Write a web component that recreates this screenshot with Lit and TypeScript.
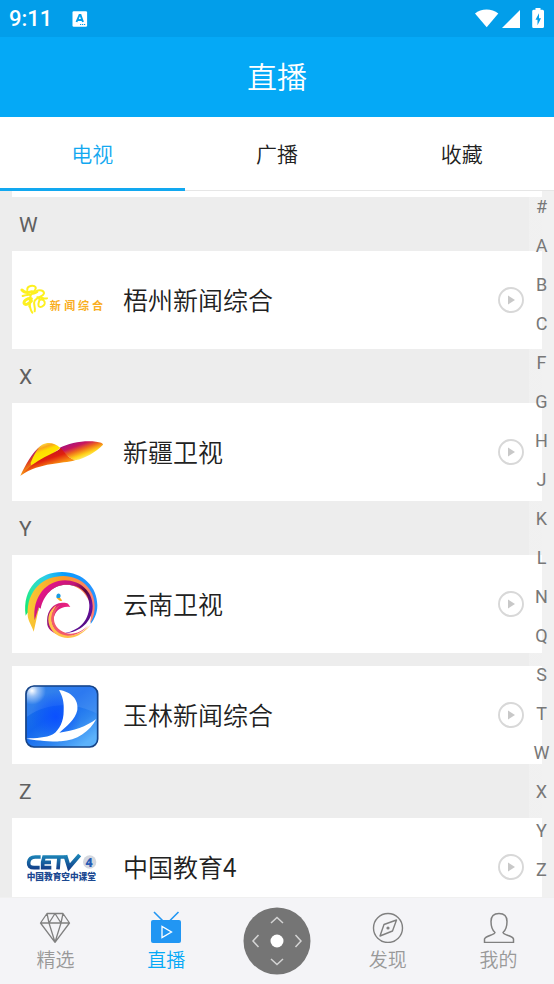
import { LitElement, html, css, svg, type TemplateResult } from "lit";
import { customElement, state } from "lit/decorators.js";
import { classMap } from "lit/directives/class-map.js";

interface Channel {
  name: string;
  logo: TemplateResult;
}

interface Section {
  letter: string;
  channels: Channel[];
}

const wuzhouLogo = html`<svg class="logo" viewBox="60 54 252 252" aria-hidden="true">
  <g fill="none" stroke="#fdf020" stroke-linecap="round" stroke-linejoin="round">
    <path stroke-width="9" d="M66 150c6 7 18 9 30 5M94 176c-10-2-22 4-22 13 3 9 16 2 22-6" />
    <path stroke-width="6" d="M82 150c-2-14 20-16 25-8 3 9-10 14-15 24-4 12 0 22-4 34M68 168c12-6 30-2 44-12" />
    <path stroke-width="6" d="M88 190c2 12 4 22 9 28M108 154c12-6 24-2 24 6-2 10-20 10-28 22-6 12 4 20 0 32M112 172c12-2 20 6 29 3M118 180c10-4 18 2 16 11-2 8-14 13-18 7-4-8 4-16 2-20" />
  </g>
  <text class="cjk" x="149 193 234 276" y="211" font-size="33" font-weight="700" fill="#f9ae22">新闻综合</text>
</svg>`;

const xinjiangLogo = html`<svg class="logo" viewBox="60 30 252 252" aria-hidden="true">
  <defs>
    <linearGradient id="xa" x1="92" y1="152" x2="118" y2="190" gradientUnits="userSpaceOnUse">
      <stop offset="0" stop-color="#f3a52a" /><stop offset=".25" stop-color="#b3206a" />
      <stop offset=".55" stop-color="#e0401c" /><stop offset="1" stop-color="#f9a010" />
    </linearGradient>
    <linearGradient id="xb" x1="232" y1="122" x2="252" y2="176" gradientUnits="userSpaceOnUse">
      <stop offset="0" stop-color="#a8127c" /><stop offset=".25" stop-color="#c9165c" />
      <stop offset=".5" stop-color="#ee6a1c" /><stop offset=".78" stop-color="#ffd21a" />
      <stop offset="1" stop-color="#fff27a" />
    </linearGradient>
    <linearGradient id="xc" x1="150" y1="150" x2="165" y2="195" gradientUnits="userSpaceOnUse">
      <stop offset="0" stop-color="#c31420" /><stop offset=".5" stop-color="#e0200f" />
      <stop offset="1" stop-color="#f9920f" />
    </linearGradient>
    <linearGradient id="xd" x1="130" y1="128" x2="144" y2="165" gradientUnits="userSpaceOnUse">
      <stop offset="0" stop-color="#ffe94a" /><stop offset=".35" stop-color="#f9a51c" />
      <stop offset=".6" stop-color="#ffdc00" /><stop offset="1" stop-color="#ffe600" />
    </linearGradient>
  </defs>
  <path fill="url(#xb)" d="M178 144c30-16 76-24 110-19 12 1 22 4 21 9-22 22-50 40-84 47-16-6-34-20-47-37z" />
  <path fill="url(#xa)" d="M61 227c14-30 36-72 62-90l30 20L90 204z" />
  <path fill="url(#xd)" d="M92 188c8-20 20-44 34-54 18-9 38-6 55 10-30 24-58 40-88 52z" />
  <path fill="url(#xc)" d="M61 227c22-22 46-42 72-55 18-9 38-18 50-28 10 14 22 30 42 37-40 12-100 4-164 46z" />
</svg>`;

const yunnanLogo = html`<svg class="logo" viewBox="60 36 252 252" aria-hidden="true">
  <defs>
    <linearGradient id="ya" x1="80" y1="190" x2="290" y2="130" gradientUnits="userSpaceOnUse">
      <stop offset="0" stop-color="#15e874" /><stop offset=".16" stop-color="#2be5b0" />
      <stop offset=".4" stop-color="#2bcbe8" /><stop offset=".65" stop-color="#079cff" />
      <stop offset="1" stop-color="#2a93ff" />
    </linearGradient>
    <linearGradient id="yb" x1="90" y1="0" x2="290" y2="0" gradientUnits="userSpaceOnUse">
      <stop offset="0" stop-color="#f9c733" /><stop offset=".5" stop-color="#fb9a28" /><stop offset="1" stop-color="#ff7a78" />
    </linearGradient>
    <linearGradient id="yc" x1="110" y1="110" x2="260" y2="240" gradientUnits="userSpaceOnUse">
      <stop offset="0" stop-color="#f0148c" /><stop offset=".4" stop-color="#c01678" />
      <stop offset=".6" stop-color="#5c0638" /><stop offset=".8" stop-color="#6a10a0" /><stop offset="1" stop-color="#4a0b78" />
    </linearGradient>
    <linearGradient id="yd" x1="140" y1="0" x2="210" y2="0" gradientUnits="userSpaceOnUse">
      <stop offset="0" stop-color="#86107c" /><stop offset=".3" stop-color="#d0207c" /><stop offset="1" stop-color="#ef2080" />
    </linearGradient>
  </defs>
  <path fill="url(#ya)" d="M77 197C66 112 120 66 186 66c64 0 106 46 106 100 0 24-8 40-20 56 4-32 8-52-4-72-12-32-42-46-68-46-40 0-75 31-84 78-14-6-26-6-39 15z" />
  <path fill="url(#yb)" d="M101 245c-4-14-18-34-18-50C80 120 130 78 190 78c55 0 95 42 94 90 0 22-4 37-14 52 8-40 2-62-8-76-14-26-38-40-62-40-40 0-75 31-84 74z" />
  <path fill="url(#yc)" d="M104 211C96 140 140 91 195 91c45 0 83 34 83 77 0 47-38 80-86 82 53-10 76-45 76-85 0-35-28-61-68-61s-70 31-78 72l-6-4z" />
  <path fill="url(#yd)" d="M142 224c-4-34 10-56 34-64l6-1c10-1 18 0 22 2l7 10c-28-4-46 12-50 34-4 24 8 44 34 51-30 0-50-16-53-32z" />
  <path fill="#ffc24a" d="M170 166c-22 14-30 36-22 60 10 28 40 44 72 36 20-6 38-20 52-38-28 28-56 38-84 28-28-10-36-34-32-54 2-14 8-24 14-32z" />
  <path fill="#f25a6c" d="M180 165c-22 10-30 32-24 54 6 24 24 36 48 38 24 0 46-12 62-32-22 22-46 30-68 24-26-8-38-28-36-48 2-14 8-26 18-36z" />
  <path fill="#1a9be0" d="M169 140c0-7 4-10 9-9 5 2 5 9 1 13h-9z" />
  <path fill="#f7a81d" d="M170 144h11l6 8-6 1-4-2z" />
</svg>`;

const yulinLogo = html`<svg class="logo" viewBox="60 39 252 252" aria-hidden="true">
  <defs>
    <linearGradient id="la" x1="100" y1="75" x2="240" y2="262" gradientUnits="userSpaceOnUse">
      <stop offset="0" stop-color="#1f78e4" /><stop offset=".45" stop-color="#1266ee" />
      <stop offset=".75" stop-color="#2f86f0" /><stop offset="1" stop-color="#5cb2fb" />
    </linearGradient>
    <radialGradient id="lb" cx="96" cy="92" r="42" gradientUnits="userSpaceOnUse">
      <stop offset="0" stop-color="#fff" /><stop offset=".4" stop-color="#fff" stop-opacity=".5" /><stop offset="1" stop-color="#fff" stop-opacity="0" />
    </radialGradient>
    <radialGradient id="lc" cx="168" cy="170" r="75" gradientUnits="userSpaceOnUse">
      <stop offset="0" stop-color="#0b50ff" /><stop offset="1" stop-color="#0b50ff" stop-opacity="0" />
    </radialGradient>
  </defs>
  <rect x="77" y="77" width="217" height="185" rx="25" fill="url(#la)" />
  <path fill="#6aa6f4" opacity=".3" d="M80 100q0-21 21-21h170q20 0 20 20v62c-60-30-140-40-211 10z" />
  <rect x="77" y="77" width="217" height="185" rx="25" fill="url(#lc)" />
  <rect x="77" y="77" width="217" height="185" rx="25" fill="url(#lb)" />
  <rect x="78" y="78" width="215" height="183" rx="24" fill="none" stroke="#174487" stroke-width="5" />
  <path fill="#fff" d="M177 90c34 4 60 28 55 60-6 30-32 48-54 68 44-6 80-18 111-41-20 38-58 64-106 67-40 1-80-4-104-8 30-2 58-2 80-13 20-14 32-40 32-70 2-26-4-46-14-63z" />
</svg>`;

const cetvLogo = html`<svg class="logo" viewBox="60 45 252 252" aria-hidden="true">
  <defs>
    <linearGradient id="ca" x1="0" y1="135" x2="0" y2="180" gradientUnits="userSpaceOnUse">
      <stop offset="0" stop-color="#1c86b8" /><stop offset="1" stop-color="#123a86" />
    </linearGradient>
  </defs>
  <g fill="none" stroke="url(#ca)" stroke-width="11">
    <path d="M122 141h-16q-18 0-20 16t16 16h17M157 141h-25l-4 16v16h26M127 157h26M157 141h40M177 141l-3 37" />
    <path stroke-width="12" d="M196 136l11 36 32-37" />
  </g>
  <circle cx="269" cy="156" r="20" fill="#d3d7df" />
  <text class="latin" x="256" y="170" font-size="39" font-weight="900" fill="#285cb4">4</text>
  <text class="cjk" x="80" y="209" font-size="26" font-weight="900" fill="#1b4891">中国教育空中课堂</text>
</svg>`;

const SECTIONS: Section[] = [
  { letter: "W", channels: [{ name: "梧州新闻综合", logo: wuzhouLogo }] },
  { letter: "X", channels: [{ name: "新疆卫视", logo: xinjiangLogo }] },
  {
    letter: "Y",
    channels: [
      { name: "云南卫视", logo: yunnanLogo },
      { name: "玉林新闻综合", logo: yulinLogo },
    ],
  },
  { letter: "Z", channels: [{ name: "中国教育4", logo: cetvLogo }] },
];

const TABS = ["电视", "广播", "收藏"];
const INDEX = [..."#ABCFGHJKLNQSTWXYZ"];

const diamondIcon = svg`<g fill="none" stroke="#808080" stroke-width="1.3" stroke-linejoin="round">
  <path d="M8 2.500h16l6.500 9.500L16 31.300 1.500 12zM1.500 12h29M8 2.500 10 12l6 19.300L22 12l2-9.500M10 12l6-9.500L22 12" /></g>`;
const tvIcon = svg`<path d="M4 1l8.500 8.500M28.500 1 20 9.500" fill="none" stroke="#2196f3" stroke-width="1.600" />
  <rect x="1" y="9" width="30" height="23" rx="2" fill="#2196f3" />
  <path d="M12 15.500v11l9.500-5.500z" fill="none" stroke="#fff" stroke-width="1.300" />`;
const compassIcon = svg`<g fill="none" stroke="#808080" stroke-width="1.400" stroke-linejoin="round">
  <circle cx="16" cy="17" r="14.500" /><path d="M24.500 9 20.500 20 8 25 12 13.500z" /></g>
  <circle cx="16" cy="17" r="1.600" fill="#808080" />`;
const personIcon = svg`<path d="M16 2.500c-5 0-8 3-8 8 0 5 .5 8 4 11-.2 2.500-9.500 3-10.500 6.500v3.500h29V28c-1-3.500-10.300-4-10.500-6.500 3.500-3 4-6 4-11 0-5-3-8-8-8z"
  fill="none" stroke="#808080" stroke-width="1.500" stroke-linejoin="round" />`;

@customElement("app-root")
export class AppRoot extends LitElement {
  @state() private tab = 0;
  @state() private page = "直播";

  static styles = css`
    :host {
      display: flex;
      flex-direction: column;
      height: 100vh;
      overflow: hidden;
      background: #ededed;
      color: #212121;
      font-family: Roboto, "Noto Sans CJK SC", sans-serif;
      font-weight: 350;
    }
    button {
      font: inherit;
      color: inherit;
      background: none;
      border: 0;
      padding: 0;
      margin: 0;
      cursor: pointer;
    }
    svg { display: block; flex: none; }
    .cjk { font-family: "Noto Sans CJK SC", sans-serif; }
    .latin { font-family: Roboto, sans-serif; }
    .status {
      flex: none;
      display: flex;
      align-items: center;
      height: 37px;
      padding: 0 9px;
      background: #029eea;
      color: #fff;
      font-size: 22px;
      font-weight: 500;
    }
    .clock { margin-right: 20px; }
    .signals { display: flex; align-items: center; margin-left: auto; }
    .header {
      flex: none;
      display: flex;
      align-items: center;
      justify-content: center;
      height: 80px;
      padding-bottom: 4px;
      box-sizing: border-box;
      background: #05a9f6;
      color: #fff;
    }
    h1 { margin: 0; font-size: 30px; font-weight: 350; }
    .tabs {
      flex: none;
      display: flex;
      height: 73px;
      background: #fff;
      border-bottom: 1px solid #e6e6e6;
    }
    .tab {
      flex: 1;
      font-size: 21px;
      border-bottom: 3px solid transparent;
      margin-bottom: -1px;
    }
    .tab.active { color: #12a8f0; border-color: #12a8f0; }
    .body { flex: 1; min-height: 0; display: flex; position: relative; }
    .list {
      flex: 1;
      padding: 0 12px;
      overflow-y: auto;
      scrollbar-width: none;
    }
    .tail { height: 6px; background: #fff; }
    h2 {
      margin: 0;
      padding: 3px 0 0 7px;
      font-size: 21px;
      line-height: 51px;
      font-weight: 400;
      color: #606060;
    }
    .cards { display: flex; flex-direction: column; gap: 13px; }
    .card {
      display: flex;
      align-items: center;
      width: 100%;
      height: 98px;
      padding: 0 18px 0 8px;
      background: #fff;
      text-align: left;
    }
    .logo { width: 84px; height: 84px; }
    .name {
      flex: 1;
      margin-left: 19px;
      padding-bottom: 2px;
      font-family: "Noto Sans CJK SC", sans-serif;
      font-size: 25px;
    }
    .index {
      position: absolute;
      top: 0;
      right: 0;
      bottom: 0;
      width: 25px;
      display: flex;
      flex-direction: column;
      gap: 8px;
      overflow: hidden;
      background: linear-gradient(to right, rgba(255, 255, 255, 0.2) 13px, #f1f1f1 13px);
    }
    .index button { font-size: 18px; font-weight: 400; line-height: 31px; color: #787878; }
    .nav {
      flex: none;
      display: flex;
      height: 86px;
      background: #f4f4f7;
      border-top: 1px solid #f0f0f0;
    }
    .item {
      flex: 1;
      display: flex;
      flex-direction: column;
      align-items: center;
      justify-content: flex-start;
      gap: 5px;
      padding-top: 13px;
      font-size: 19px;
      line-height: 26px;
      color: #999;
    }
    .item.active { color: #05a9f6; }
    .remote { flex: 1; display: flex; align-items: center; justify-content: center; }
  `;

  private renderCard(c: Channel) {
    return html`<button class="card">
      ${c.logo}
      <span class="name">${c.name}</span>
      <svg width="26" height="26" viewBox="0 0 26 26" aria-hidden="true">
        <circle cx="13" cy="13" r="12" fill="none" stroke="#d8d8d8" stroke-width="1.900" />
        <path d="M10 8.500v9l7-4.500z" fill="#c8c8c8" />
      </svg>
    </button>`;
  }

  private renderItem(label: string, icon: TemplateResult | ReturnType<typeof svg>) {
    return html`<button
      class=${classMap({ item: true, active: this.page === label })}
      @click=${() => (this.page = label)}
    >
      <svg width="32" height="32" viewBox="0 0 32 32" aria-hidden="true">${icon}</svg>
      ${label}
    </button>`;
  }

  render() {
    return html`
      <div class="status">
        <span class="clock">9:11</span>
        <svg width="16" height="16" viewBox="0 0 16 16" aria-hidden="true">
          <rect x=".5" y=".3" width="14.600" height="15.400" rx="1.300" fill="#fff" />
          <path d="M4.500 11 7.500 4h1L11 11M5.500 9h4.500" fill="none" stroke="#029eea" stroke-width="1.900" />
          <path d="M8 13.500h6" stroke="#029eea" stroke-width="1.200" stroke-dasharray="1.200 .8" />
        </svg>
        <div class="signals">
          <svg width="71" height="23" viewBox="474 7 71 23" fill="#fff" aria-hidden="true">
            <path d="M475 13.500C481 8 492 8 498.300 13.500L486.700 27.300z" />
            <path d="M520 10v18h-18z" />
            <path fill-rule="evenodd" d="M535.500 8h5v1.800h2q1.500 0 1.500 1.500v15.200q0 1.500-1.500 1.500h-9q-1.300 0-1.300-1.500V11.300q0-1.500 1.300-1.500h2zM539 13.200l-3.500 6.500h2v5.500l3.500-7h-2z" />
          </svg>
        </div>
      </div>
      <header class="header"><h1>直播</h1></header>
      <div class="tabs">
        ${TABS.map(
          (t, i) => html`<button
            class=${classMap({ tab: true, active: i === this.tab })}
            @click=${() => (this.tab = i)}
          >${t}</button>`
        )}
      </div>
      <div class="body">
        <main class="list">
          <div class="tail"></div>
          ${SECTIONS.map(
            (s) => html`<section>
              <h2>${s.letter}</h2>
              <div class="cards">${s.channels.map((c) => this.renderCard(c))}</div>
            </section>`
          )}
        </main>
        <div class="index">${INDEX.map((l) => html`<button>${l}</button>`)}</div>
      </div>
      <nav class="nav">
        ${this.renderItem("精选", diamondIcon)}
        ${this.renderItem("直播", tvIcon)}
        <button class="remote" aria-label="遥控器">
          <svg width="68" height="68" viewBox="0 0 68 68" aria-hidden="true">
            <circle cx="34" cy="34" r="33.500" fill="#757575" />
            <circle cx="34" cy="34" r="6.500" fill="#fff" />
            <path d="M28 16l6-5.500 6 5.500M28 52l6 5.500 6-5.500M15.500 28 10 34l5.500 6M52.500 28 58 34l-5.500 6" fill="none" stroke="#d4d4d4" stroke-width="1.500" />
          </svg>
        </button>
        ${this.renderItem("发现", compassIcon)}
        ${this.renderItem("我的", personIcon)}
      </nav>
    `;
  }
}
